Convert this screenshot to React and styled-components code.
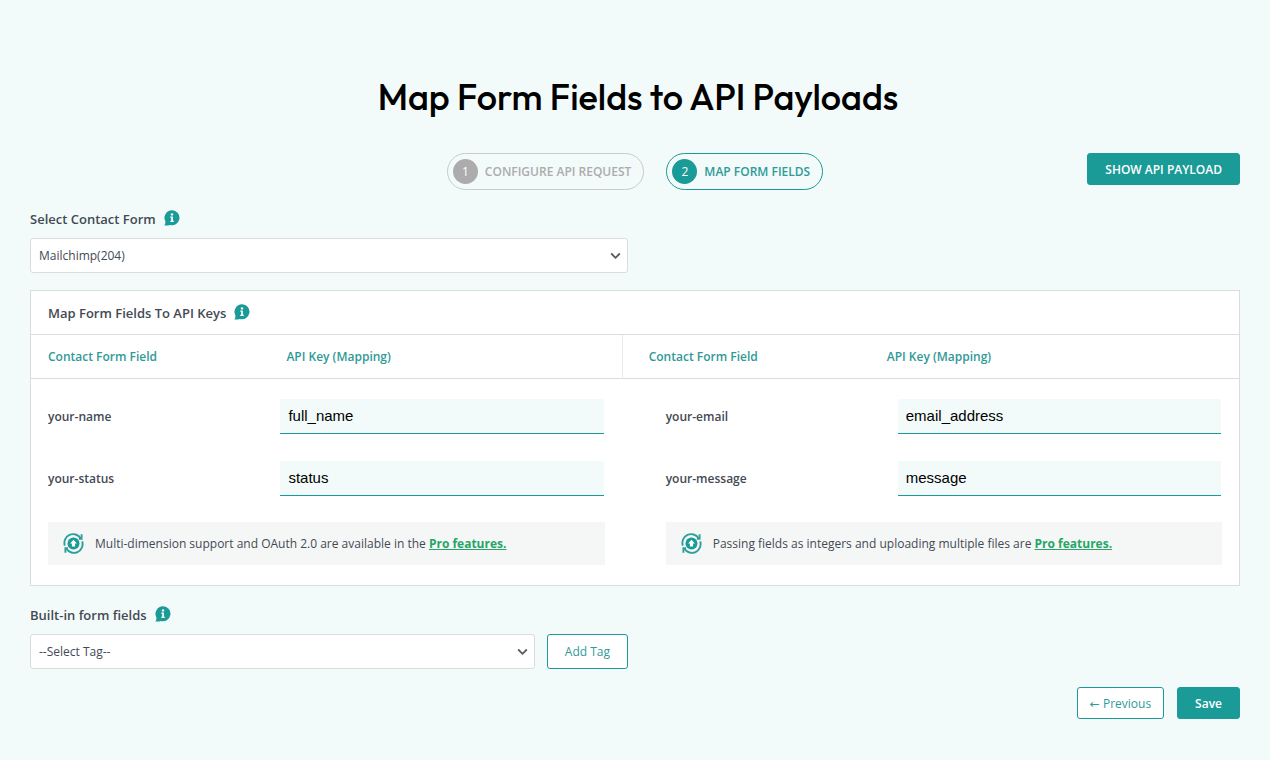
import { useState } from "react";
import styled, { ThemeProvider, createGlobalStyle } from "styled-components";

const theme = {
  colors: {
    page: "#f2fbfa",
    teal: "#1a9b98",
    tealText: "#2f9a97",
    green: "#27a567",
    text: "#434a54",
    grey: "#acacac",
    greyBorder: "#c6cccb",
    border: "#d9dddd",
    divider: "#e8ebeb",
    note: "#f5f7f7",
    white: "#ffffff",
  },
  screens: {
    md: "900px",
  },
};

const GlobalStyle = createGlobalStyle`
  * {
    box-sizing: border-box;
  }
  body {
    margin: 0;
    background-color: ${({ theme }) => theme.colors.page};
    color: ${({ theme }) => theme.colors.text};
    font-family: "Segoe UI", "Open Sans", "DejaVu Sans", sans-serif;
    font-size: 12px;
  }
  button,
  select {
    font-family: inherit;
  }
`;

const Page = styled.main`
  padding: 74px 30px 42px;
`;

const Title = styled.h1`
  margin: 0;
  padding-left: 6px;
  color: #000000;
  font-family: Outfit, Lato, sans-serif;
  font-size: 36px;
  font-weight: 500;
  line-height: 46px;
  text-align: center;
`;

// top bar
const TopBar = styled.div`
  display: grid;
  grid-template-columns: 1fr auto 1fr;
  align-items: start;
  margin-top: 33px;
  @media (max-width: ${({ theme }) => theme.screens.md}) {
    grid-template-columns: 1fr;
    gap: 16px;
  }
`;

const Steps = styled.nav`
  grid-column: 2;
  display: flex;
  gap: 22px;
  @media (max-width: ${({ theme }) => theme.screens.md}) {
    grid-column: 1;
  }
`;

const Step = styled.button`
  display: flex;
  align-items: center;
  gap: 7px;
  height: 37px;
  padding: 0 12px 0 5px;
  border: 1px solid
    ${({ theme, $active }) =>
      $active ? theme.colors.teal : theme.colors.greyBorder};
  border-radius: 19px;
  background: transparent;
  color: ${({ theme, $active }) =>
    $active ? theme.colors.tealText : theme.colors.grey};
  font-size: 12px;
  font-weight: 600;
  text-transform: uppercase;
  cursor: pointer;
`;

const StepNumber = styled.span`
  width: 25px;
  height: 25px;
  border-radius: 50%;
  background-color: ${({ theme, $active }) =>
    $active ? theme.colors.teal : theme.colors.grey};
  color: ${({ theme }) => theme.colors.white};
  font-weight: 400;
  line-height: 25px;
  text-align: center;
`;

const Button = styled.button`
  height: ${({ $tall }) => ($tall ? "35px" : "32px")};
  padding: 0 17px;
  border: 1px solid ${({ theme }) => theme.colors.teal};
  border-radius: 3px;
  background-color: ${({ theme, $solid }) =>
    $solid ? theme.colors.teal : theme.colors.white};
  color: ${({ theme, $solid }) =>
    $solid ? theme.colors.white : theme.colors.tealText};
  font-size: 12px;
  font-weight: ${({ $solid }) => ($solid ? 600 : 400)};
  cursor: pointer;
`;

const PayloadButton = styled(Button)`
  justify-self: end;
  @media (max-width: ${({ theme }) => theme.screens.md}) {
    justify-self: start;
  }
`;

// fields
const LabelRow = styled.div`
  display: flex;
  align-items: center;
  gap: 8px;
  height: 20px;
  margin-top: ${({ $top }) => $top};
  margin-bottom: 9px;
`;

const Label = styled.label`
  font-size: 13px;
  font-weight: 600;
`;

const InfoSvg = styled.svg`
  display: block;
  width: 16px;
  height: 16px;
  margin-bottom: 2px;
`;

const SelectRow = styled.div`
  display: flex;
  gap: 12px;
  width: 50%;
  min-width: 300px;
  padding-right: 7px;
`;

const SelectWrap = styled.div`
  position: relative;
  flex: 1;
`;

const Select = styled.select`
  display: block;
  width: 100%;
  height: 35px;
  padding: 0 32px 0 8px;
  border: 1px solid ${({ theme }) => theme.colors.border};
  border-radius: 3px;
  background-color: ${({ theme }) => theme.colors.white};
  color: ${({ theme }) => theme.colors.text};
  font-size: 12px;
  appearance: none;
`;

const Chevron = styled.svg`
  position: absolute;
  top: 14px;
  right: 7px;
  width: 11px;
  height: 8px;
  pointer-events: none;
`;

// mapping panel
const Panel = styled.section`
  margin-top: 17px;
  border: 1px solid ${({ theme }) => theme.colors.border};
  background-color: ${({ theme }) => theme.colors.white};
`;

const PanelHeader = styled.div`
  display: flex;
  align-items: center;
  gap: 8px;
  height: 44px;
  padding: 0 17px;
  border-bottom: 1px solid ${({ theme }) => theme.colors.border};
`;

const PanelTitle = styled.h2`
  margin: 0;
  font-size: 13px;
  font-weight: 600;
`;

const Table = styled.table`
  width: 100%;
  border-collapse: separate;
  border-spacing: 0;
  table-layout: fixed;
`;

const Col = styled.col`
  width: ${({ $width }) => $width};
`;

const HeadCell = styled.th`
  height: 44px;
  padding: 0 0 0 ${({ $left }) => $left};
  border-bottom: 1px solid ${({ theme }) => theme.colors.border};
  border-left: ${({ theme, $divided }) =>
    $divided ? `1px solid ${theme.colors.divider}` : "none"};
  color: ${({ theme }) => theme.colors.tealText};
  font-size: 12px;
  font-weight: 600;
  text-align: left;
`;

const NameCell = styled.td`
  padding: 20px 0 7px ${({ $left }) => $left};
  font-weight: 600;
`;

const KeyCell = styled.td`
  padding: 20px 18px 7px ${({ $left }) => $left};
`;

const KeyInput = styled.input`
  display: block;
  width: 100%;
  height: 35px;
  padding: 0 8px 2px;
  border: 0 solid ${({ theme }) => theme.colors.teal};
  border-bottom-width: 1px;
  border-radius: 0;
  background-color: ${({ theme }) => theme.colors.page};
  color: #000000;
  font-family: "Liberation Sans", Arial, sans-serif;
  font-size: 15px;
`;

const NoteCell = styled.td`
  padding: 19px 17px 20px ${({ $left }) => $left};
`;

const Note = styled.p`
  display: flex;
  align-items: center;
  gap: 11px;
  min-height: 43px;
  margin: 0;
  padding: 0 15px;
  background-color: ${({ theme }) => theme.colors.note};
`;

const NoteSvg = styled.svg`
  flex: none;
  width: 21px;
  height: 21px;
`;

const ProLink = styled.a`
  color: ${({ theme }) => theme.colors.green};
  font-weight: 700;
`;

const Footer = styled.div`
  display: flex;
  justify-content: flex-end;
  gap: 13px;
  margin-top: 18px;
`;

const PreviousButton = styled(Button)`
  padding: 0 12px;
`;

function InfoIcon() {
  return (
    <InfoSvg viewBox="0 0 16 16" aria-hidden="true">
      <path
        d="M8.2 0.3a7.5 7.5 0 1 1-2.6 14.6Q5 15.6 0.4 15.5Q1.6 14 1.4 11.4A7.5 7.5 0 0 1 8.2 0.3Z"
        fill="#1a9b98"
      />
      <circle cx="8" cy="4.4" r="1.2" fill="#fff" />
      <path d="M6.3 6.6h2.6v4.2h0.9v1.1H6.3v-1.1h0.9V7.7h-0.9z" fill="#fff" />
    </InfoSvg>
  );
}

function UpgradeIcon() {
  return (
    <NoteSvg viewBox="0 0 21 21" fill="none" aria-hidden="true">
      <g stroke="#2f9f9b" strokeWidth="1.9">
        <path d="M1.8 12.6A8.8 8.8 0 0 1 17.6 5.2" />
        <path d="M18.6 1.2v4.6h-2.6" />
        <path d="M19.2 8.4A8.8 8.8 0 0 1 3.4 15.8" />
        <path d="M2.4 19.8v-4.6h2.6" />
      </g>
      <circle cx="10.5" cy="10.5" r="6" fill="#1a9b98" />
      <path d="M10.5 6.8l3.4 3.6h-1.8v3.2H8.9v-3.2H7.1z" fill="#fff" />
    </NoteSvg>
  );
}

function SelectChevron() {
  return (
    <Chevron viewBox="0 0 11 8" fill="none" aria-hidden="true">
      <path d="M1.2 1.5l4.3 4.3 4.3-4.3" stroke="#555b61" strokeWidth="1.8" />
    </Chevron>
  );
}

const rows = [
  ["your-name", "your-email"],
  ["your-status", "your-message"],
];

function App() {
  const [keys, setKeys] = useState({
    "your-name": "full_name",
    "your-email": "email_address",
    "your-status": "status",
    "your-message": "message",
  });

  const handleChange = (e) => {
    setKeys({ ...keys, [e.target.name]: e.target.value });
  };

  const renderField = (name, right) => [
    <NameCell key={name} $left={right ? "44px" : "17px"}>
      <label htmlFor={name}>{name}</label>
    </NameCell>,
    <KeyCell key={`${name}-key`} $left={right ? "20px" : "3px"}>
      <KeyInput
        id={name}
        name={name}
        value={keys[name]}
        onChange={handleChange}
      />
    </KeyCell>,
  ];

  return (
    <ThemeProvider theme={theme}>
      <GlobalStyle />
      <Page>
        <Title>Map Form Fields to API Payloads</Title>

        <TopBar>
          <Steps>
            <Step type="button">
              <StepNumber>1</StepNumber>
              Configure API Request
            </Step>
            <Step type="button" $active>
              <StepNumber $active>2</StepNumber>
              Map Form Fields
            </Step>
          </Steps>
          <PayloadButton type="button" $solid>
            SHOW API PAYLOAD
          </PayloadButton>
        </TopBar>

        <LabelRow $top="19px">
          <Label htmlFor="contact-form">Select Contact Form</Label>
          <InfoIcon />
        </LabelRow>
        <SelectRow>
          <SelectWrap>
            <Select id="contact-form">
              <option>Mailchimp(204)</option>
            </Select>
            <SelectChevron />
          </SelectWrap>
        </SelectRow>

        <Panel>
          <PanelHeader>
            <PanelTitle>Map Form Fields To API Keys</PanelTitle>
            <InfoIcon />
          </PanelHeader>
          <Table>
            <colgroup>
              <Col $width="20.4%" />
              <Col $width="28.5%" />
              <Col $width="21.2%" />
              <Col $width="29.9%" />
            </colgroup>
            <thead>
              <tr>
                <HeadCell $left="17px">Contact Form Field</HeadCell>
                <HeadCell $left="9px">API Key (Mapping)</HeadCell>
                <HeadCell $left="26px" $divided>
                  Contact Form Field
                </HeadCell>
                <HeadCell $left="9px">API Key (Mapping)</HeadCell>
              </tr>
            </thead>
            <tbody>
              {rows.map(([left, right]) => (
                <tr key={left}>
                  {renderField(left, false)}
                  {renderField(right, true)}
                </tr>
              ))}
              <tr>
                <NoteCell colSpan={2} $left="17px">
                  <Note>
                    <UpgradeIcon />
                    <span>
                      Multi-dimension support and OAuth 2.0 are available in the{" "}
                      <ProLink href="#pro">Pro features.</ProLink>
                    </span>
                  </Note>
                </NoteCell>
                <NoteCell colSpan={2} $left="44px">
                  <Note>
                    <UpgradeIcon />
                    <span>
                      Passing fields as integers and uploading multiple files are{" "}
                      <ProLink href="#pro">Pro features.</ProLink>
                    </span>
                  </Note>
                </NoteCell>
              </tr>
            </tbody>
          </Table>
        </Panel>

        <LabelRow $top="19px">
          <Label htmlFor="tag">Built-in form fields</Label>
          <InfoIcon />
        </LabelRow>
        <SelectRow>
          <SelectWrap>
            <Select id="tag">
              <option>--Select Tag--</option>
            </Select>
            <SelectChevron />
          </SelectWrap>
          <Button type="button" $tall>
            Add Tag
          </Button>
        </SelectRow>

        <Footer>
          <PreviousButton type="button">← Previous</PreviousButton>
          <Button type="button" $solid>
            Save
          </Button>
        </Footer>
      </Page>
    </ThemeProvider>
  );
}

export default App;
